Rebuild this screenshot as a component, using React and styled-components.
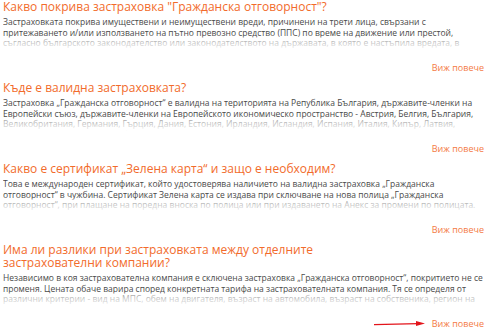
import React from "react";
import styled, { createGlobalStyle } from "styled-components";

const GlobalStyle = createGlobalStyle`
  html, body {
    margin: 0;
    padding: 0;
    background: #ffffff;
  }
  body {
    font-family: "Open Sans", "Noto Sans", "DejaVu Sans", sans-serif;
  }
`;

const Page = styled.div`
  width: 500px;
  padding: 0 16px 0 3px;
  box-sizing: border-box;
`;

const Item = styled.section`
  position: relative;
  margin-bottom: 7px;
`;

const Question = styled.h2`
  margin: 0 0 4px;
  max-width: 410px;
  font-size: 12px;
  line-height: 13px;
  font-weight: 400;
  color: #f26b2b;
`;

const Answer = styled.div`
  position: relative;
  height: 33px;
  overflow: hidden;
  font-size: 8.5px;
  line-height: 10.5px;
  color: #4a4a4a;

  &::after {
    content: "";
    position: absolute;
    left: 0;
    right: 0;
    bottom: 0;
    height: 13px;
    background: linear-gradient(
      to bottom,
      rgba(255, 255, 255, 0.45),
      rgba(255, 255, 255, 0.75) 60%,
      rgba(255, 255, 255, 0.9)
    );
  }
`;

const MoreRow = styled.div`
  display: flex;
  justify-content: flex-end;
  margin-top: 12px;
`;

const More = styled.a`
  position: relative;
  font-size: 9px;
  line-height: 12px;
  color: #f47a44;
  text-decoration: none;
  cursor: pointer;
`;

const Arrow = styled.svg`
  position: absolute;
  right: calc(100% + 6px);
  top: 2px;
  width: 52px;
  height: 8px;
`;

const items = [
  {
    q: 'Какво покрива застраховка "Гражданска отговорност"?',
    a: "Застраховката покрива имуществени и неимуществени вреди, причинени на трети лица, свързани с притежаването и/или използването на пътно превозно средство (ППС) по време на движение или престой, съгласно българското законодателство или законодателството на държавата, в която е настъпила вредата, в рамките на определените в закона минимални лимити на отговорност.",
  },
  {
    q: "Къде е валидна застраховката?",
    a: "Застраховка „Гражданска отговорност“ е валидна на територията на Република България, държавите-членки на Европейски съюз, държавите-членки на Европейското икономическо пространство - Австрия, Белгия, България, Великобритания, Германия, Гърция, Дания, Естония, Ирландия, Исландия, Испания, Италия, Кипър, Латвия, Литва, Лихтенщайн, Люксембург, Малта, Норвегия, Полша, Португалия, Румъния.",
  },
  {
    q: "Какво е сертификат „Зелена карта“ и защо е необходим?",
    a: "Това е международен сертификат, който удостоверява наличието на валидна застраховка „Гражданска отговорност“ в чужбина. Сертификат Зелена карта се издава при сключване на нова полица „Гражданска отговорност“, при плащане на поредна вноска по полица или при издаването на Анекс за промени по полицата. Сертификатът е задължителен при пътуване извън страната.",
  },
  {
    q: "Има ли разлики при застраховката между отделните застрахователни компании?",
    a: "Независимо в коя застрахователна компания е сключена застраховка „Гражданска отговорност“, покритието не се променя. Цената обаче варира според конкретната тарифа на застрахователната компания. Тя се определя от различни критерии - вид на МПС, обем на двигателя, възраст на автомобила, възраст на собственика, регион на регистрация и история на щетите.",
    pointer: true,
  },
];

const App = () => (
  <>
    <GlobalStyle />
    <Page lang="bg">
      {items.map((item) => (
        <Item key={item.q}>
          <Question>{item.q}</Question>
          <Answer>{item.a}</Answer>
          <MoreRow>
            <More>
              {item.pointer && (
                <Arrow viewBox="0 0 52 8">
                  <line x1="0" y1="4.6" x2="44" y2="3.6" stroke="#e3141b" strokeWidth="1.4" />
                  <path d="M42 1 L51 3.5 L42 6 Z" fill="#e3141b" />
                </Arrow>
              )}
              Виж повече
            </More>
          </MoreRow>
        </Item>
      ))}
    </Page>
  </>
);

export default App;
